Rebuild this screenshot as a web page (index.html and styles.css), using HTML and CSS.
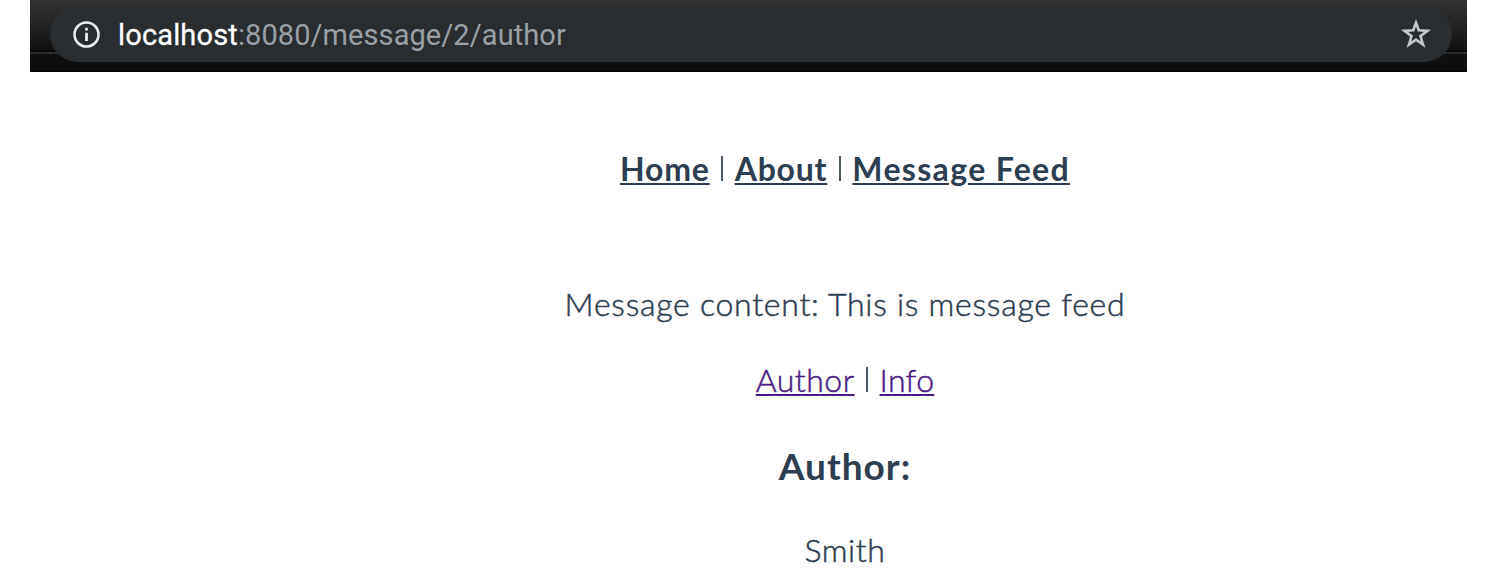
FILE: index.html
```html
<!DOCTYPE html>
<html lang="en">
<head>
<meta charset="utf-8">
<title>Message author</title>
<link rel="stylesheet" href="styles.css">
</head>
<body>
<header class="browser-bar">
  <div class="address">
    <svg class="info-icon" width="28" height="28" viewBox="0 0 28 28" fill="none">
      <circle cx="14.5" cy="14.5" r="12" stroke="#e8eaed" stroke-width="2.6"/>
      <path d="M14.5 12.7V21M14.5 7.8V10.6" stroke="#e8eaed" stroke-width="2.8"/>
    </svg>
    <div class="url"><span class="host">localhost</span><span class="path">:8080/message/2/author</span></div>
    <svg class="star-icon" width="30" height="30" viewBox="0 0 30 30" fill="none">
      <path d="M15 3.8L17.7 11.3L26.4 11.9L19.5 17.1L22 25.5L15 20.6L8 25.5L10.5 17.1L3.6 11.9L12.3 11.3Z" stroke="#c4c7ca" stroke-width="2.6"/>
    </svg>
  </div>
</header>
<main class="app">
  <nav class="nav"><a class="home" href="#">Home</a><i class="bar"></i><a class="about" href="#">About</a><i class="bar"></i><a class="feed" href="#">Message Feed</a></nav>
  <p class="content">Message content: This is message feed</p>
  <div class="tabs"><a class="author-link" href="#">Author</a><i class="bar"></i><a class="info-link" href="#">Info</a></div>
  <h3 class="title">Author:</h3>
  <p class="name">Smith</p>
</main>
</body>
</html>
```
FILE: styles.css
```css
* { box-sizing: border-box; }
body {
  margin: 0;
  height: 580px;
  overflow: hidden;
  background: #fff;
  color: #2c3e50;
  font-family: Lato, "Open Sans", sans-serif;
}
.browser-bar {
  height: 72px;
  margin: 0 30px;
  padding: 6px 15px 10px 20px;
  background: linear-gradient(#333 0, #292929 14px, #1c1c1c 35px, #101010 50px, #080808 51px, #080808 52px, #2c2c2c 52px, #2c2c2c 54px, #101010 54px, #0e0e0e 70px, #000 72px);
}
.address {
  display: flex;
  align-items: center;
  height: 56px;
  padding: 0 21px 0 22px;
  border-radius: 28px;
  background: linear-gradient(#2d2f30 0, #292d30 12px);
}
.url {
  margin: 1px 0 0 18px;
  font: 400 29px/32px Roboto, sans-serif;
  white-space: nowrap;
}
.host {
  color: #fff;
  letter-spacing: 0.15px;
  -webkit-text-stroke: 0.3px currentColor;
}
.path { color: #9aa0a6; letter-spacing: 0.08px; }
.star-icon { margin-left: auto; }
.app {
  margin-left: 193px;
  text-align: center;
  font-size: 32px;
  font-weight: 300;
  line-height: 40px;
}
.nav, .tabs {
  display: flex;
  justify-content: center;
  height: 40px;
}
.nav { margin-top: 77px; }
.nav a {
  color: #2c3e50;
  font-weight: 700;
}
.home, .about { letter-spacing: 0.8px; }
.feed { letter-spacing: 1.33px; }
a {
  text-decoration: underline;
  text-decoration-thickness: 2px;
  text-underline-offset: 2px;
}
.bar {
  width: 2px;
  height: 25px;
  margin: 7px 11.5px 0;
  background: #4b5a69;
}
.content, .tabs, .name { -webkit-text-stroke: 0.5px currentColor; }
.content { margin: 95px 0 0; letter-spacing: 0.74px; }
.tabs { margin-top: 36px; }
.tabs a { color: #4a1d86; }
.author-link { letter-spacing: 0.5px; }
.info-link { letter-spacing: 0.3px; }
.title {
  margin: 46px 0 0;
  font-size: 37px;
  font-weight: 700;
  line-height: 40px;
  letter-spacing: 1px;
}
.name { margin: 44px 0 0; letter-spacing: 0.6px; }
```
